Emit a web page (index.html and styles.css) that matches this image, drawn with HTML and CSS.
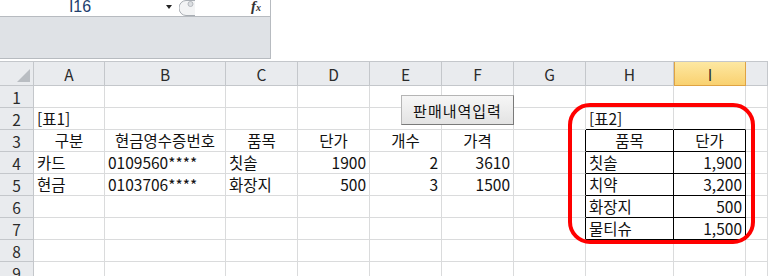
FILE: index.html
```html
<!DOCTYPE html>
<html lang="ko">
<head>
<meta charset="UTF-8">
<title>판매내역</title>
<link rel="stylesheet" href="styles.css">
</head>
<body>

<!-- 이름 상자 / 수식 입력줄 -->
<div class="top">
  <div class="namePanel">
    <div class="nameRow">
      <div class="nameBox">I16</div>
      <div class="dropArrow"></div>
      <svg class="splitter" width="16" height="16" viewBox="0 0 16 16">
        <path d="M16 0.5 H7 A7 7.5 0 0 0 7 15.5 H16" fill="#f3f4f5" stroke="#a9aeb4"/>
        <circle cx="11.5" cy="4" r="2.5" fill="#dcdfe2" stroke="#b5b9be"/>
      </svg>
      <div class="fx"><i>f</i><span>x</span></div>
    </div>
  </div>
  <div class="formulaInput"></div>
</div>

<!-- 시트 -->
<div class="sheet">
  <div class="hd corner"><span class="tri"></span></div>
  <div class="hd">A</div><div class="hd">B</div><div class="hd">C</div><div class="hd">D</div>
  <div class="hd">E</div><div class="hd">F</div><div class="hd">G</div><div class="hd">H</div>
  <div class="hd sel">I</div><div class="hd"></div>

  <div class="rh">1</div>
  <div class="c"></div><div class="c"></div><div class="c"></div><div class="c"></div><div class="c"></div>
  <div class="c"></div><div class="c"></div><div class="c"></div><div class="c"></div><div class="c"></div>

  <div class="rh">2</div>
  <div class="c">[표1]</div><div class="c"></div><div class="c"></div><div class="c"></div><div class="c"></div>
  <div class="c"></div><div class="c"></div><div class="c bb">[표2]</div><div class="c bb"></div><div class="c"></div>

  <div class="rh">3</div>
  <div class="c mid">구분</div><div class="c mid">현금영수증번호</div><div class="c mid">품목</div>
  <div class="c mid">단가</div><div class="c mid">개수</div><div class="c mid">가격</div>
  <div class="c br"></div><div class="c tb mid">품목</div><div class="c tb mid">단가</div><div class="c"></div>

  <div class="rh">4</div>
  <div class="c">카드</div><div class="c">0109560****</div><div class="c">칫솔</div>
  <div class="c num">1900</div><div class="c num">2</div><div class="c num">3610</div>
  <div class="c br"></div><div class="c tb">칫솔</div><div class="c tb num">1,900</div><div class="c"></div>

  <div class="rh">5</div>
  <div class="c">현금</div><div class="c">0103706****</div><div class="c">화장지</div>
  <div class="c num">500</div><div class="c num">3</div><div class="c num">1500</div>
  <div class="c br"></div><div class="c tb">치약</div><div class="c tb num">3,200</div><div class="c"></div>

  <div class="rh">6</div>
  <div class="c"></div><div class="c"></div><div class="c"></div><div class="c"></div><div class="c"></div>
  <div class="c"></div><div class="c br"></div><div class="c tb">화장지</div><div class="c tb num">500</div><div class="c"></div>

  <div class="rh">7</div>
  <div class="c"></div><div class="c"></div><div class="c"></div><div class="c"></div><div class="c"></div>
  <div class="c"></div><div class="c br"></div><div class="c tb">물티슈</div><div class="c tb num">1,500</div><div class="c"></div>

  <div class="rh">8</div>
  <div class="c"></div><div class="c"></div><div class="c"></div><div class="c"></div><div class="c"></div>
  <div class="c"></div><div class="c"></div><div class="c"></div><div class="c"></div><div class="c"></div>

  <div class="rh">9</div>
  <div class="c"></div><div class="c"></div><div class="c"></div><div class="c"></div><div class="c"></div>
  <div class="c"></div><div class="c"></div><div class="c"></div><div class="c"></div><div class="c"></div>

  <!-- 시트 위에 놓인 단추와 강조 표시 -->
  <button class="inputButton">판매내역입력</button>
  <div class="highlight"></div>
</div>

</body>
</html>
```

FILE: styles.css
```css
body {
  margin: 0;
  overflow: hidden;
  background: #fff;
  font-family: "Noto Sans CJK KR", "Noto Sans", sans-serif;
  font-size: 15.5px;
  color: #111;
}
.top {
  display: flex;
  height: 59px;
  margin-bottom: 2px;
}
.namePanel {
  width: 271px;
  box-sizing: border-box;
  background: #dfe2e6;
  border-right: 1px solid #b7bbc0;
  border-bottom: 1px solid #b7bbc0;
}
.nameRow {
  display: flex;
  height: 17px;
  box-sizing: border-box;
  background: #fff;
  border-bottom: 1px solid #b7bbc0;
  overflow: hidden;
}
.nameBox {
  width: 160px;
  text-align: center;
  color: #22406d;
  font-family: "Liberation Sans", sans-serif;
  font-size: 16px;
  line-height: 14px;
}
.dropArrow {
  width: 0;
  height: 0;
  margin: 5px 0 0 6px;
  border-left: 3px solid transparent;
  border-right: 3px solid transparent;
  border-top: 4px solid #222;
}
.splitter {
  margin-left: 7px;
}
.fx {
  margin-left: 56px;
  font-family: "Liberation Serif", serif;
  font-weight: bold;
  font-size: 15px;
  line-height: 13px;
  color: #333;
}
.fx span {
  font-size: 10px;
  font-style: italic;
}
.formulaInput {
  flex: 1;
  background: #fff;
}
.sheet {
  position: relative;
  display: grid;
  grid-template-columns: 34px 71px 121px 72px 72px 72px 72px 72px 88px 72px 1fr;
  grid-template-rows: 24px repeat(9, 22px);
  border-top: 1px solid #c4c7cb;
}
.hd, .rh {
  display: flex;
  align-items: center;
  justify-content: center;
  box-sizing: border-box;
  background: #e9ebee;
  border-right: 1px solid #c4c7cb;
  border-bottom: 1px solid #c4c7cb;
  color: #2b2b2b;
  line-height: 20px;
}
.hd.sel {
  background: linear-gradient(#fde8a2, #f9d170);
  border: 1px solid #dfa343;
  border-top: none;
}
.corner {
  align-items: flex-end;
  justify-content: flex-end;
  padding: 0 3px 3px 0;
}
.tri {
  width: 0;
  height: 0;
  border-left: 13px solid transparent;
  border-bottom: 13px solid #b9bdc2;
}
.c {
  box-sizing: border-box;
  border-right: 1px solid #dadbdc;
  border-bottom: 1px solid #dadbdc;
  padding: 0 3px;
  line-height: 21px;
  white-space: nowrap;
}
.mid {
  text-align: center;
}
.num {
  text-align: right;
}
.bb {
  border-bottom-color: #000;
}
.br {
  border-right-color: #000;
}
.tb {
  border-right-color: #000;
  border-bottom-color: #000;
}
.inputButton {
  position: absolute;
  left: 401px;
  top: 33px;
  width: 113px;
  height: 30px;
  padding: 0;
  font-family: "Noto Sans CJK KR", sans-serif;
  font-size: 15px;
  letter-spacing: 1px;
  color: #111;
  background: linear-gradient(#f6f6f6, #e3e3e3);
  border: 1px solid #b5b5b5;
  border-right-color: #7a7a7a;
  border-bottom-color: #7a7a7a;
  border-radius: 0;
}
.highlight {
  position: absolute;
  left: 568px;
  top: 41px;
  width: 187px;
  height: 141px;
  box-sizing: border-box;
  border: 4px solid #f00;
  border-radius: 22px;
}
```
